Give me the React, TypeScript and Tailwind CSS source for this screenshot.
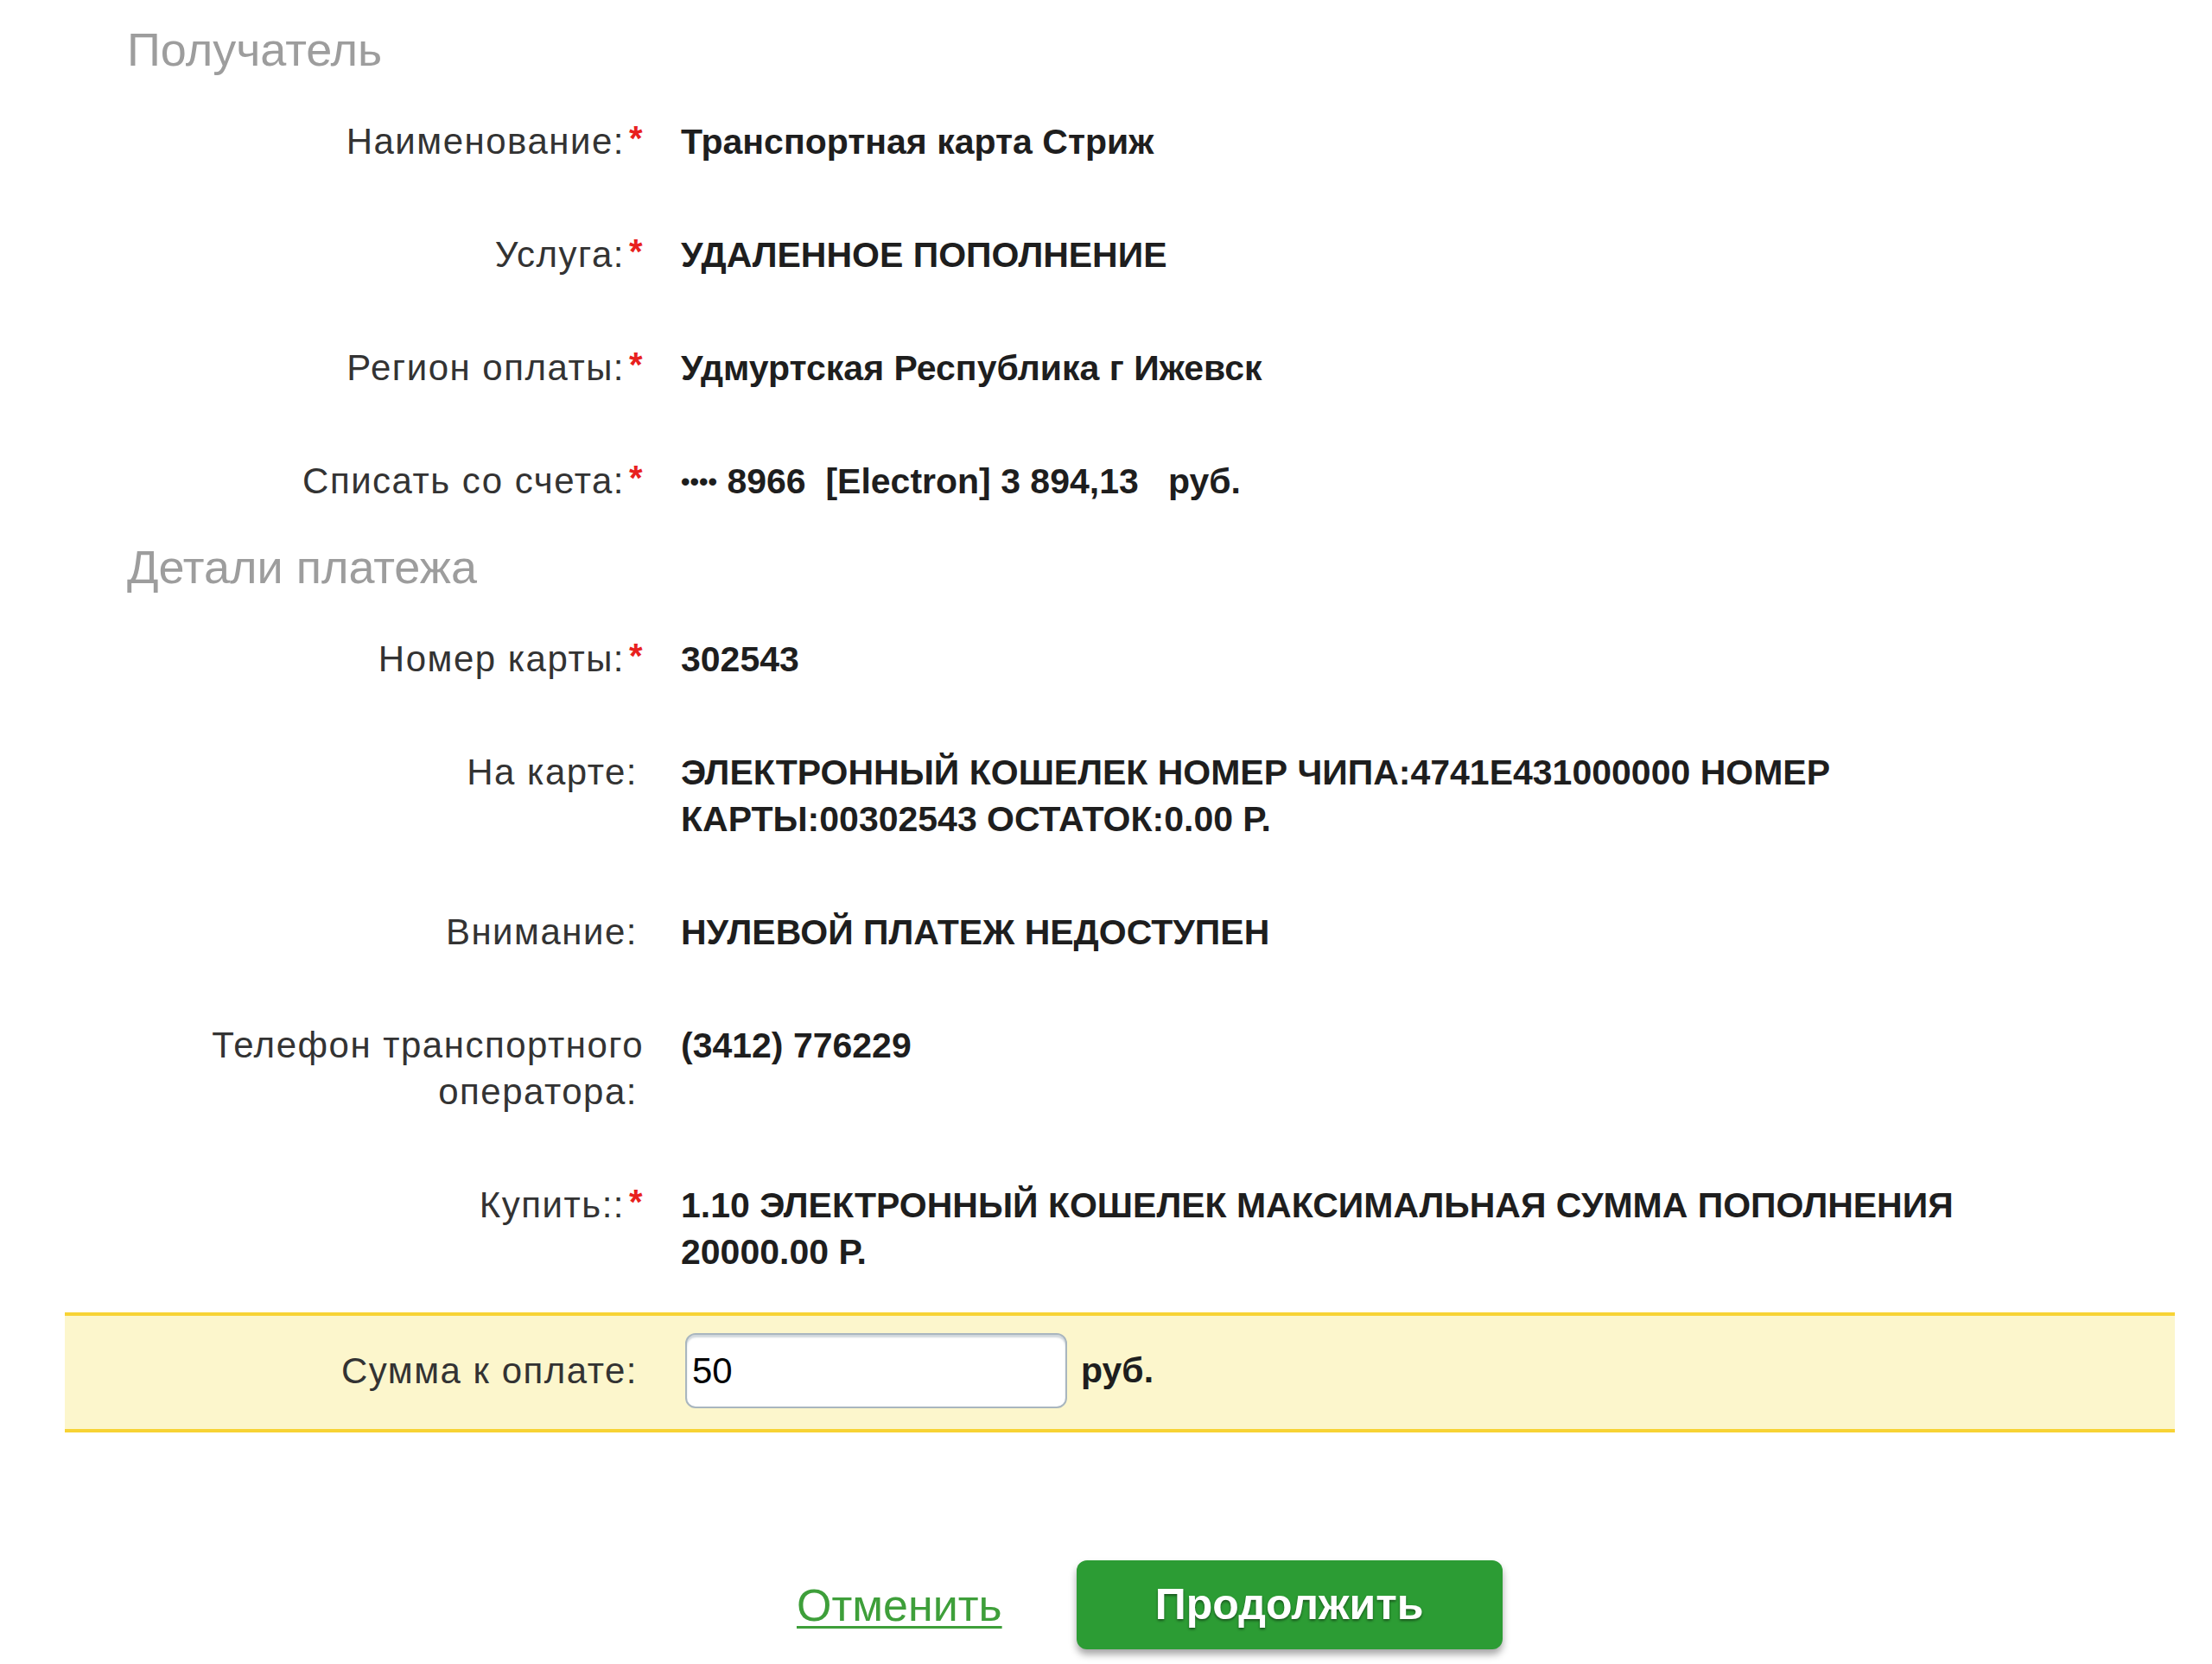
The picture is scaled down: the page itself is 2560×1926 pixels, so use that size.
import React from 'react';

type RowProps = {
  label: React.ReactNode;
  required?: boolean;
  children: React.ReactNode;
};

function Label({ label, required }: { label: React.ReactNode; required?: boolean }) {
  return (
    <div className="w-[670px] shrink-0 text-right text-[42px] leading-[54px] tracking-[1.5px] text-[#333333]">
      {label}
      {required ? (
        <span className="inline-block w-[22px] text-right align-top text-[40px] font-bold leading-[46px] text-[#e8211e]">*</span>
      ) : (
        <span className="inline-block w-[7px]" />
      )}
    </div>
  );
}

function Row({ label, required, children }: RowProps) {
  return (
    <div className="flex pt-[39px] pb-[38px]">
      <Label label={label} required={required} />
      <div className="ml-[43px] w-[1590px] text-[41px] font-bold leading-[54px] text-[#1e1e1e]">{children}</div>
    </div>
  );
}

function Section({ title }: { title: string }) {
  return (
    <div className="pl-[72px] pt-[3px] pb-[11px] text-[54px] leading-[60px] text-[#9d9d9d]">{title}</div>
  );
}

export default function App() {
  return (
    <div className="min-h-[1926px] w-[2560px] bg-white font-['Liberation_Sans',Arial,sans-serif]">
      <div className="pl-[75px] pr-[43px] pt-[24px]">
        <Section title="Получатель" />
        <Row label="Наименование:" required>
          Транспортная карта Стриж
        </Row>
        <Row label="Услуга:" required>
          УДАЛЕННОЕ ПОПОЛНЕНИЕ
        </Row>
        <Row label="Регион оплаты:" required>
          Удмуртская Республика г Ижевск
        </Row>
        <Row label="Списать со счета:" required>
          <span className="whitespace-pre">
            <span className="text-[30px] align-[3px]">••••</span> 8966  [Electron] 3 894,13   руб.
          </span>
        </Row>

        <Section title="Детали платежа" />
        <Row label="Номер карты:" required>
          302543
        </Row>
        <Row label="На карте:">
          ЭЛЕКТРОННЫЙ КОШЕЛЕК НОМЕР ЧИПА:4741E431000000 НОМЕР КАРТЫ:00302543 ОСТАТОК:0.00 Р.
        </Row>
        <Row label="Внимание:">НУЛЕВОЙ ПЛАТЕЖ НЕДОСТУПЕН</Row>
        <Row label="Телефон транспортного оператора:">(3412) 776229</Row>
        <Row label="Купить::" required>
          1.10 ЭЛЕКТРОННЫЙ КОШЕЛЕК МАКСИМАЛЬНАЯ СУММА ПОПОЛНЕНИЯ 20000.00 Р.
        </Row>

        <div className="mt-[5px] flex items-center border-y-4 border-[#f7d334] bg-[#fcf6cc] pt-[20px] pb-[24px]">
          <Label label="Сумма к оплате:" />
          <input
            defaultValue="50"
            className="ml-[48px] h-[87px] w-[442px] rounded-[12px] border-2 border-[#a9b6bf] bg-white px-[6px] text-[42px] text-black shadow-[inset_0_3px_2px_rgba(120,140,155,0.35)] outline-none"
          />
          <span className="ml-[16px] text-[41px] font-bold text-[#1e1e1e]">руб.</span>
        </div>

        <div className="mt-[148px] flex items-center gap-[86px] pl-[847px] pb-[19px]">
          <a href="#" className="text-[52px] leading-[60px] text-[#3e9f3a] underline decoration-[3px] underline-offset-[6px]">
            Отменить
          </a>
          <button className="h-[103px] w-[493px] rounded-[12px] bg-[#2c9c34] text-[50px] font-bold text-white shadow-[0_6px_8px_rgba(0,0,0,0.35)] [text-shadow:0_2px_3px_rgba(0,0,0,0.45)]">
            Продолжить
          </button>
        </div>
      </div>
    </div>
  );
}
